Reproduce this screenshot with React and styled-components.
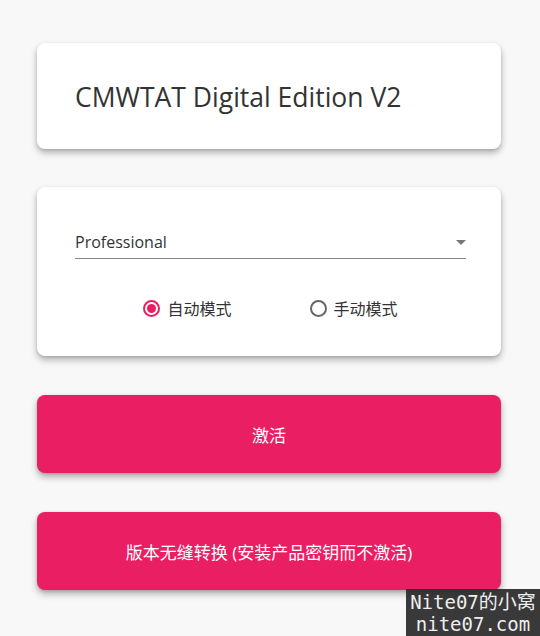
import React from "react";
import styled, { createGlobalStyle } from "styled-components";

const GlobalStyle = createGlobalStyle`
  html, body {
    margin: 0;
    padding: 0;
    background: #f8f8f8;
    font-family: "Open Sans", "Noto Sans CJK SC", sans-serif;
  }
`;

export default () => {
  return (
    <Page>
      <GlobalStyle />
      <TitleCard>
        <Title>CMWTAT Digital Edition V2</Title>
      </TitleCard>
      <OptionsCard>
        <Select>
          <SelectText>Professional</SelectText>
          <Caret />
        </Select>
        <RadioRow>
          <RadioLabel>
            <RadioCircle checked />
            自动模式
          </RadioLabel>
          <RadioLabel>
            <RadioCircle />
            手动模式
          </RadioLabel>
        </RadioRow>
      </OptionsCard>
      <PinkButton>激活</PinkButton>
      <PinkButton>版本无缝转换 (安装产品密钥而不激活)</PinkButton>
      <Watermark>
        Nite07的小窝
        <br />
        nite07.com
      </Watermark>
    </Page>
  );
};

const Page = styled.div`
  position: relative;
  width: 540px;
  height: 636px;
  box-sizing: border-box;
  padding: 43px 39px 0 37px;
  display: flex;
  flex-direction: column;
  gap: 38px;
  overflow: hidden;
`;

const Card = styled.div`
  background: #fff;
  border-radius: 8px;
  box-shadow: 0 4px 7px rgba(0, 0, 0, 0.28), 0 1px 3px rgba(0, 0, 0, 0.12);
`;

const TitleCard = styled(Card)`
  height: 106px;
  display: flex;
  align-items: center;
  padding-left: 38px;
`;

const Title = styled.div`
  font-size: 26.5px;
  color: #333;
  margin-top: 2px;
`;

const OptionsCard = styled(Card)`
  height: 169px;
  box-sizing: border-box;
  padding: 42px 35px 0 38px;
  display: flex;
  flex-direction: column;
`;

const Select = styled.div`
  display: flex;
  align-items: center;
  justify-content: space-between;
  height: 28px;
  padding-bottom: 1px;
  border-bottom: 1px solid #888;
`;

const SelectText = styled.span`
  font-size: 16px;
  color: #333;
  margin-bottom: 3px;
`;

const Caret = styled.span`
  width: 0;
  height: 0;
  border-left: 5px solid transparent;
  border-right: 5px solid transparent;
  border-top: 5px solid #777;
  margin-bottom: 2px;
`;

const RadioRow = styled.div`
  display: flex;
  justify-content: center;
  gap: 78px;
  margin-top: 37px;
`;

const RadioLabel = styled.label`
  display: flex;
  align-items: center;
  gap: 7px;
  font-size: 16px;
  color: #333;
`;

const RadioCircle = styled.span`
  box-sizing: border-box;
  width: 17px;
  height: 17px;
  border-radius: 50%;
  border: 2px solid ${p => (p.checked ? "#e91e63" : "#666")};
  display: flex;
  align-items: center;
  justify-content: center;
  &::after {
    content: "";
    width: 9px;
    height: 9px;
    border-radius: 50%;
    background: ${p => (p.checked ? "#e91e63" : "transparent")};
  }
`;

const PinkButton = styled.div`
  height: 78px;
  border-radius: 8px;
  background: #e91e63;
  color: #fff;
  font-size: 17px;
  display: flex;
  align-items: center;
  justify-content: center;
  box-shadow: 0 4px 7px rgba(0, 0, 0, 0.3), 0 1px 3px rgba(0, 0, 0, 0.12);
  margin-top: 1px;
`;

const Watermark = styled.div`
  position: absolute;
  right: 0;
  bottom: 0;
  width: 134px;
  height: 47px;
  background: rgba(40, 40, 40, 0.92);
  color: #eee;
  font-family: "DejaVu Sans Mono", "Noto Sans CJK SC", monospace;
  font-size: 19px;
  line-height: 22px;
  text-align: center;
  padding-top: 2px;
  box-sizing: border-box;
  white-space: nowrap;
`;
